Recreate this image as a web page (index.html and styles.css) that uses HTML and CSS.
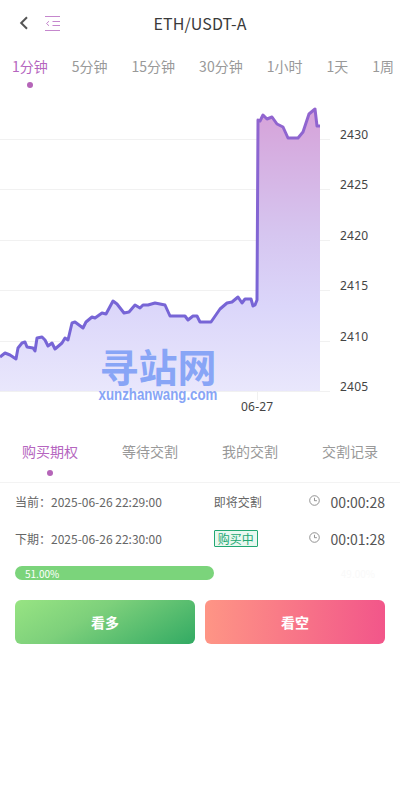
FILE: index.html
```html
<!DOCTYPE html>
<html lang="zh-CN">
<head>
  <meta charset="UTF-8">
  <meta name="viewport" content="width=device-width, initial-scale=1.0">
  <title>ETH/USDT-A</title>
  <link rel="stylesheet" href="styles.css">
</head>
<body>
  <div class="page">
    <!-- Header -->
    <div class="top-bar">
      <div class="top-icons">
        <svg class="back-icon" width="10" height="16" viewBox="0 0 10 16"><path d="M8 2.2 2.2 8 8 13.8" fill="none" stroke="#555" stroke-width="2"/></svg>
        <svg class="menu-icon" width="17" height="15" viewBox="0 0 17 15"><path d="M1 .5h15M8.5 5.5h7.5M8.5 9.5h7.5M1 14.5h15" fill="none" stroke="#c587cd" stroke-width="1"/><path d="M5 5.2 2.5 7.5 5 9.8" fill="none" stroke="#c587cd" stroke-width="1"/></svg>
      </div>
      <h1>ETH/USDT-A</h1>
    </div>

    <!-- Periods -->
    <div class="periods">
      <span class="period active">1分钟</span>
      <span class="period">5分钟</span>
      <span class="period">15分钟</span>
      <span class="period">30分钟</span>
      <span class="period">1小时</span>
      <span class="period">1天</span>
      <span class="period">1周</span>
    </div>

    <!-- Chart -->
    <div class="chart">
      <svg width="400" height="320" viewBox="0 100 400 320">
        <defs>
          <linearGradient id="areaFill" gradientUnits="userSpaceOnUse" x1="0" y1="109" x2="0" y2="391">
            <stop offset="0" stop-color="#d6a2d9"/>
            <stop offset="0.45" stop-color="#d6c6f0"/>
            <stop offset="0.7" stop-color="#dbd6fa"/>
            <stop offset="1" stop-color="#e9e7fc"/>
          </linearGradient>
          <linearGradient id="lineStroke" gradientUnits="userSpaceOnUse" x1="0" y1="109" x2="0" y2="391">
            <stop offset="0" stop-color="#9265cf"/>
            <stop offset="0.7" stop-color="#7765d6"/>
            <stop offset="1" stop-color="#7765d6"/>
          </linearGradient>
        </defs>
        <g class="grid">
          <path d="M0 139.5h330M0 189.5h330M0 240.5h330M0 290.5h330M0 341.5h330M0 391.5h330M257.5 391v9"/>
        </g>
        <path fill="url(#areaFill)" d="M0 357 5 353 10 355 16 359 18 348 22 343 25 342 27 347 33 348 35 351 37 338 42 337 45 340 48 346 52 343 55 349 62 343 65 338 68 340 72 323 75 322 83 328 86 322 92 317 95 318 102 313 106 314 113 301 117 304 124 313 129 312 135 305 140 308 143 305 148 305 155 303 165 305 170 316 185 316 188 320 193 316 197 316 200 322 211 322 220 309 227 303 232 302 238 297 242 303 245 299 251 299 253 306 255 305 257 300 258 120 260 121 263 115 267 119 272 117 277 124 283 127 288 138 298 138 303 132 309 114 315 109 317 126 320 126 320 391 0 391Z"/>
        <path class="price-line" stroke="url(#lineStroke)" d="M0 357 5 353 10 355 16 359 18 348 22 343 25 342 27 347 33 348 35 351 37 338 42 337 45 340 48 346 52 343 55 349 62 343 65 338 68 340 72 323 75 322 83 328 86 322 92 317 95 318 102 313 106 314 113 301 117 304 124 313 129 312 135 305 140 308 143 305 148 305 155 303 165 305 170 316 185 316 188 320 193 316 197 316 200 322 211 322 220 309 227 303 232 302 238 297 242 303 245 299 251 299 253 306 255 305 257 300 258 120 260 121 263 115 267 119 272 117 277 124 283 127 288 138 298 138 303 132 309 114 315 109 317 126 320 126"/>
        <g class="axis-text">
          <text x="340" y="138.5">2430</text>
          <text x="340" y="188.5">2425</text>
          <text x="340" y="239.5">2420</text>
          <text x="340" y="289.5">2415</text>
          <text x="340" y="340.5">2410</text>
          <text x="340" y="390.5">2405</text>
          <text x="241" y="410.5">06-27</text>
        </g>
      </svg>
      <div class="watermark">
        <div class="wm-big">寻站网</div>
        <div class="wm-small">xunzhanwang.com</div>
      </div>
    </div>

    <!-- Tabs -->
    <div class="tabs">
      <span class="tab active">购买期权</span>
      <span class="tab">等待交割</span>
      <span class="tab">我的交割</span>
      <span class="tab">交割记录</span>
    </div>

    <!-- Rounds -->
    <div class="rounds">
      <div class="round">
        <span class="round-date">当前：2025-06-26 22:29:00</span>
        <span class="round-state"><span>即将交割</span></span>
        <svg class="clock" width="11" height="11" viewBox="0 0 11 11"><circle cx="5.5" cy="5.5" r="4.8" fill="none" stroke="#777" stroke-width=".8"/><path d="M5.5 2.8v2.9h2.4" fill="none" stroke="#777" stroke-width=".8"/></svg>
        <span class="round-time">00:00:28</span>
      </div>
      <div class="round">
        <span class="round-date">下期：2025-06-26 22:30:00</span>
        <span class="round-state"><span class="buying">购买中</span></span>
        <svg class="clock" width="11" height="11" viewBox="0 0 11 11"><circle cx="5.5" cy="5.5" r="4.8" fill="none" stroke="#777" stroke-width=".8"/><path d="M5.5 2.8v2.9h2.4" fill="none" stroke="#777" stroke-width=".8"/></svg>
        <span class="round-time">00:01:28</span>
      </div>
    </div>

    <!-- Ratio -->
    <div class="ratio">
      <div class="ratio-bar">51.00%</div>
      <div class="ratio-rest">49.00%</div>
    </div>

    <!-- Buttons -->
    <div class="actions">
      <button class="btn btn-up">看多</button>
      <button class="btn btn-down">看空</button>
    </div>
  </div>
</body>
</html>
```

FILE: styles.css
```css
body {
  margin: 0;
  padding: 0;
  background-color: #fff;
  font-family: "Noto Sans CJK SC", "Noto Sans", sans-serif;
  color: #444;
}

.page {
  width: 400px;
  height: 800px;
  overflow: hidden;
}

.top-bar {
  height: 46px;
  display: flex;
  align-items: center;
  justify-content: center;
  position: relative;
}

.top-bar h1 {
  margin: 0;
  font-size: 16px;
  font-weight: 400;
  letter-spacing: 0.1px;
  color: #3a3a3a;
}

.top-icons {
  position: absolute;
  left: 19px;
  top: 15px;
  display: flex;
  align-items: center;
  gap: 15px;
}

.periods {
  display: flex;
  gap: 24px;
  padding-left: 12px;
  height: 54px;
  white-space: nowrap;
}

.period {
  position: relative;
  height: 40px;
  line-height: 40px;
  font-size: 14px;
  color: #999;
}

.period.active,
.tab.active {
  color: #b565c0;
}

.period.active::after,
.tab.active::after {
  content: "";
  position: absolute;
  left: 50%;
  width: 6px;
  height: 6px;
  margin-left: -3px;
  border-radius: 50%;
  background-color: #b565b8;
}

.period.active::after {
  top: 36px;
}

.chart {
  position: relative;
  height: 320px;
}

.chart svg {
  display: block;
}

.grid path {
  fill: none;
  stroke: #f1f1f1;
  stroke-width: 1;
}

.price-line {
  fill: none;
  stroke-width: 3;
  stroke-linejoin: round;
}

.axis-text text {
  font-family: "Noto Sans", sans-serif;
  font-size: 12px;
  letter-spacing: 0.2px;
  fill: #444;
}

.watermark {
  position: absolute;
  left: 98px;
  top: 244px;
  width: 120px;
  text-align: center;
  color: #88a5f6;
  font-weight: 700;
}

.wm-big {
  font-size: 39px;
  line-height: 42px;
}

.wm-small {
  font-family: "Liberation Sans", sans-serif;
  font-size: 16px;
  line-height: 18px;
  white-space: nowrap;
  transform: scaleX(0.83);
  transform-origin: center;
  margin: 0 -20px;
}

.tabs {
  display: flex;
  height: 62px;
  border-bottom: 1px solid #f3f3f3;
}

.tab {
  position: relative;
  width: 100px;
  height: 62px;
  line-height: 62px;
  text-align: center;
  font-size: 14px;
  color: #999;
}

.tab.active::after {
  top: 50px;
}

.rounds {
  padding: 0 15px;
}

.round {
  display: flex;
  align-items: center;
  height: 37px;
  font-size: 12px;
  color: #666;
}

.round-date {
  width: 199px;
}

.round-state {
  width: 95px;
}

.buying {
  display: inline-block;
  width: 44px;
  height: 17px;
  line-height: 15px;
  box-sizing: border-box;
  text-align: center;
  border: 1px solid #22a873;
  background-color: #e9f8f0;
  color: #22a873;
  border-radius: 1px;
}

.clock {
  margin-right: 11px;
  margin-top: -2px;
}

.round-time {
  font-size: 14px;
  color: #555;
}

.ratio {
  display: flex;
  justify-content: space-between;
  align-items: center;
  margin: 9px 15px 0;
  height: 14px;
  font-size: 10px;
}

.ratio-bar {
  width: 189px;
  height: 14px;
  line-height: 16px;
  padding-left: 10px;
  border-radius: 7px;
  background-color: #7bd47b;
  color: #fff;
}

.ratio-rest {
  padding-right: 10px;
  color: #f9f9f9;
}

.actions {
  display: flex;
  gap: 10px;
  margin: 20px 15px 0;
}

.btn {
  flex: 1;
  height: 44px;
  border: none;
  border-radius: 6px;
  color: #fff;
  font-family: inherit;
  font-size: 14px;
  font-weight: 700;
}

.btn-up {
  background: linear-gradient(150deg, #98e483 0%, #7dd07b 40%, #32aa63 100%);
}

.btn-down {
  background: linear-gradient(90deg, #fe9585 0%, #f2568a 100%);
}
```
